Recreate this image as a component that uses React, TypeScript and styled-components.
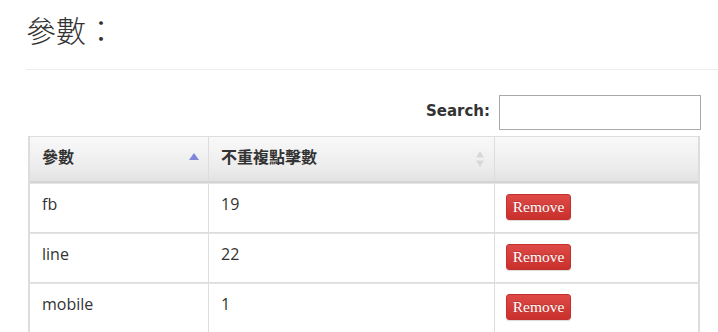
import * as React from 'react';
import styled, { createGlobalStyle } from 'styled-components';

type Param = { name: string; clicks: number };

const params: Param[] = [
  { name: 'fb', clicks: 19 },
  { name: 'line', clicks: 22 },
  { name: 'mobile', clicks: 1 },
];

const GlobalStyle = createGlobalStyle`
  html, body {
    margin: 0;
    padding: 0;
    background: #fff;
    overflow: hidden;
  }
  body {
    font-family: 'Open Sans', 'Noto Sans CJK TC', sans-serif;
    color: #333;
  }
`;

export default function App() {
  return (
    <>
      <GlobalStyle />
      <Page>
        <Title>參數：</Title>
        <Divider />
        <FilterBar>
          <FilterLabel htmlFor="param-search">Search:</FilterLabel>
          <SearchInput id="param-search" type="text" />
        </FilterBar>
        <Table>
          <thead>
            <tr>
              <HeadCell $width={179}>
                <HeadInner>
                  參數
                  <SortIcon dir="asc" />
                </HeadInner>
              </HeadCell>
              <HeadCell $width={286}>
                <HeadInner>
                  不重複點擊數
                  <SortIcon dir="both" />
                </HeadInner>
              </HeadCell>
              <HeadCell />
            </tr>
          </thead>
          <tbody>
            {params.map((p) => (
              <tr key={p.name}>
                <Cell>{p.name}</Cell>
                <Cell>{p.clicks}</Cell>
                <Cell>
                  <RemoveButton type="button">Remove</RemoveButton>
                </Cell>
              </tr>
            ))}
          </tbody>
        </Table>
      </Page>
    </>
  );
}

function SortIcon({ dir }: { dir: 'asc' | 'both' }) {
  if (dir === 'asc') {
    return (
      <SortSvg width="12" height="18" viewBox="0 0 12 18">
        <path d="M6 3 L11 10 L1 10 Z" fill="#7f86dc" />
      </SortSvg>
    );
  }
  return (
    <SortSvg width="12" height="18" viewBox="0 0 12 18">
      <path d="M6 1 L10 7.5 L2 7.5 Z" fill="#d8d8d8" />
      <path d="M6 17 L10 10.5 L2 10.5 Z" fill="#d8d8d8" />
    </SortSvg>
  );
}

const Page = styled.div`
  padding: 8px 17px 0 26px;
`;

const Title = styled.h1`
  margin: 0;
  height: 44px;
  font-family: 'Noto Sans CJK TC', sans-serif;
  font-weight: 300;
  font-size: 30px;
  line-height: 42px;
  color: #333;
`;

const Divider = styled.hr`
  margin: 17px -17px 0 0;
  border: 0;
  border-top: 1px solid #eee;
`;

const FilterBar = styled.div`
  display: flex;
  justify-content: flex-end;
  align-items: center;
  gap: 9px;
  margin-top: 25px;
`;

const FilterLabel = styled.label`
  font-family: 'DejaVu Sans', sans-serif;
  font-weight: 700;
  font-size: 15px;
  color: #333;
  margin-top: -3px;
`;

const SearchInput = styled.input`
  box-sizing: border-box;
  width: 202px;
  height: 35px;
  border: 1px solid #aaa;
  border-radius: 0;
  padding: 4px 8px;
  margin: 0;
  outline: none;
`;

const Table = styled.table`
  margin: 6px 0 0 2px;
  width: 672px;
  border-collapse: separate;
  border-spacing: 0;
  border: 1px solid #ddd;
  border-right-width: 2px;
  border-left-width: 2px;
`;

const HeadCell = styled.th<{ $width?: number }>`
  box-sizing: border-box;
  width: ${(p) => (p.$width ? `${p.$width}px` : 'auto')};
  height: 46px;
  padding: 0 8px 7px 12px;
  text-align: left;
  font-family: 'Noto Sans CJK TC', sans-serif;
  font-weight: 700;
  font-size: 16px;
  color: #333;
  background: linear-gradient(to bottom, #f9f9f9 0%, #ececec 70%, #e2e2e2 100%);
  border-right: 1px solid #ddd;
  border-bottom: 2px solid #d4d4d4;
  &:last-child {
    border-right: 0;
  }
`;

const HeadInner = styled.div`
  display: flex;
  align-items: center;
  justify-content: space-between;
`;

const SortSvg = styled.svg`
  display: block;
  flex: none;
  margin-top: 6px;
`;

const Cell = styled.td`
  box-sizing: border-box;
  height: 50px;
  padding: 0 12px 8px 12px;
  font-family: 'Open Sans', sans-serif;
  font-size: 16px;
  color: #333;
  border-right: 1px solid #ddd;
  border-top: 1px solid #e4e4e4;
  border-bottom: 1px solid #ddd;
  &:last-child {
    border-right: 0;
    padding: 0 11px;
  }
`;

const RemoveButton = styled.button`
  display: block;
  box-sizing: border-box;
  width: 65px;
  height: 26px;
  padding: 0;
  margin-top: -2px;
  font-family: 'Liberation Serif', serif;
  font-size: 15.5px;
  color: #fff;
  background: linear-gradient(to bottom, #de4a47 0%, #c9302c 100%);
  border: 1px solid #c2312d;
  border-radius: 3px;
  box-shadow: 0 1px 1px rgba(0, 0, 0, 0.15);
  text-shadow: 0 -1px 0 rgba(0, 0, 0, 0.2);
`;
